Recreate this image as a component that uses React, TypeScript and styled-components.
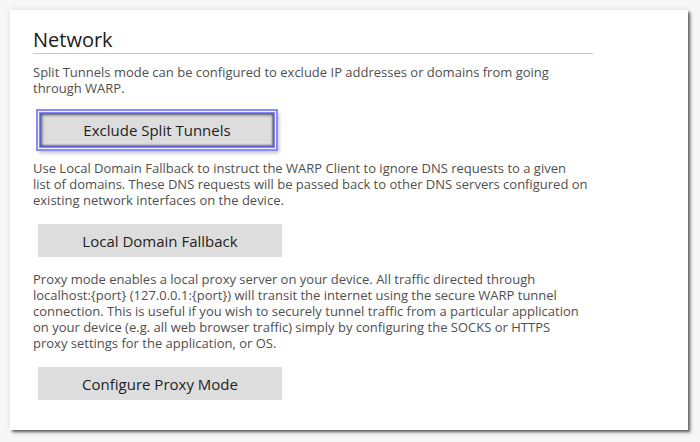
import React from "react";
import styled, { createGlobalStyle } from "styled-components";

const GlobalStyle = createGlobalStyle`
  html, body {
    margin: 0;
    padding: 0;
    background: #f7f7f7;
  }
  body {
    font-family: "Open Sans", "Noto Sans", sans-serif;
  }
  * { box-sizing: border-box; }
`;

const Page = styled.div`
  width: 700px;
  height: 442px;
  padding: 10px 12px 12px 10px;
`;

const Panel = styled.section`
  width: 678px;
  height: 420px;
  background: #ffffff;
  padding: 18px 0 0 23px;
  display: flex;
  flex-direction: column;
  align-items: flex-start;
  box-shadow: 2px 2px 2px rgba(0, 0, 0, 0.45), 3px 3px 4px rgba(0, 0, 0, 0.2),
    0 0 6px rgba(0, 0, 0, 0.1);
`;

const Heading = styled.h2`
  margin: 0;
  width: 560px;
  font-size: 20px;
  line-height: 24px;
  font-weight: 500;
  color: #1a1a1a;
  padding-bottom: 1px;
  border-bottom: 1px solid #c4c4c4;
`;

const Description = styled.p<{ $first?: boolean }>`
  margin: ${(p) => (p.$first ? "10px" : "14px")} 0 0 0;
  width: 600px;
  font-size: 13px;
  line-height: 16px;
  color: #4f4f4f;
  white-space: nowrap;
`;

const ActionButton = styled.button<{ $focused?: boolean }>`
  font-family: "Open Sans", "Noto Sans", sans-serif;
  font-size: 15px;
  color: #1e1e1e;
  background: #dddddd;
  border: none;
  padding: 0;
  cursor: pointer;
  width: ${(p) => (p.$focused ? "232px" : "244px")};
  height: ${(p) => (p.$focused ? "32px" : "33px")};
  margin: ${(p) => (p.$focused ? "18px 0 0 8px" : "16px 0 0 5px")};
  display: flex;
  align-items: center;
  justify-content: center;
  box-shadow: ${(p) =>
    p.$focused
      ? "inset 1px 1px 3px rgba(0,0,0,0.6), inset -1px -1px 2px rgba(0,0,0,0.4), 0 0 0 1px #6060d0, 0 0 0 2px #8484f2, 0 0 0 3px #f4f4ff, 0 0 0 5px #8a8aff, 2px 3px 4px 4px rgba(0,0,0,0.25)"
      : "none"};
`;

const sections = [
  {
    lines: [
      "Split Tunnels mode can be configured to exclude IP addresses or domains from going",
      "through WARP.",
    ],
    button: "Exclude Split Tunnels",
    focused: true,
  },
  {
    lines: [
      "Use Local Domain Fallback to instruct the WARP Client to ignore DNS requests to a given",
      "list of domains. These DNS requests will be passed back to other DNS servers configured on",
      "existing network interfaces on the device.",
    ],
    button: "Local Domain Fallback",
  },
  {
    lines: [
      "Proxy mode enables a local proxy server on your device. All traffic directed through",
      "localhost:{port} (127.0.0.1:{port}) will transit the internet using the secure WARP tunnel",
      "connection. This is useful if you wish to securely tunnel traffic from a particular application",
      "on your device (e.g. all web browser traffic) simply by configuring the SOCKS or HTTPS",
      "proxy settings for the application, or OS.",
    ],
    button: "Configure Proxy Mode",
  },
];

export default function App() {
  return (
    <>
      <GlobalStyle />
      <Page>
        <Panel>
          <Heading>Network</Heading>
          {sections.map((s, i) => (
            <React.Fragment key={s.button}>
              <Description $first={i === 0}>
                {s.lines.map((l, j) => (
                  <React.Fragment key={j}>
                    {l}
                    {j < s.lines.length - 1 && <br />}
                  </React.Fragment>
                ))}
              </Description>
              <ActionButton $focused={s.focused}>{s.button}</ActionButton>
            </React.Fragment>
          ))}
        </Panel>
      </Page>
    </>
  );
}
